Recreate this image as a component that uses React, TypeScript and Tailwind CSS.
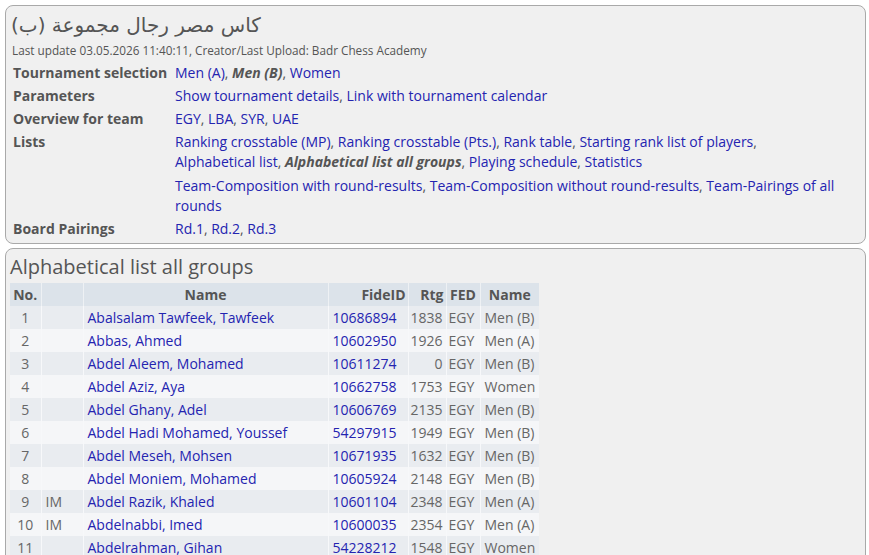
import React from 'react'

const link = 'text-[#2424b0]'
const sep = <span className="text-[#555]">, </span>

function Links({ items }: { items: (string | { cur: string })[] }) {
  return (
    <>
      {items.map((it, i) => (
        <React.Fragment key={i}>
          {i > 0 && sep}
          {typeof it === 'string' ? (
            <a className={link}>{it}</a>
          ) : (
            <b className="italic text-[#555]">{it.cur}</b>
          )}
        </React.Fragment>
      ))}
    </>
  )
}

interface Player {
  no: number
  title: string
  name: string
  fide: string
  rtg: number
  fed: string
  group: string
}

const players: Player[] = [
  { no: 1, title: '', name: 'Abalsalam Tawfeek, Tawfeek', fide: '10686894', rtg: 1838, fed: 'EGY', group: 'Men (B)' },
  { no: 2, title: '', name: 'Abbas, Ahmed', fide: '10602950', rtg: 1926, fed: 'EGY', group: 'Men (A)' },
  { no: 3, title: '', name: 'Abdel Aleem, Mohamed', fide: '10611274', rtg: 0, fed: 'EGY', group: 'Men (B)' },
  { no: 4, title: '', name: 'Abdel Aziz, Aya', fide: '10662758', rtg: 1753, fed: 'EGY', group: 'Women' },
  { no: 5, title: '', name: 'Abdel Ghany, Adel', fide: '10606769', rtg: 2135, fed: 'EGY', group: 'Men (B)' },
  { no: 6, title: '', name: 'Abdel Hadi Mohamed, Youssef', fide: '54297915', rtg: 1949, fed: 'EGY', group: 'Men (B)' },
  { no: 7, title: '', name: 'Abdel Meseh, Mohsen', fide: '10671935', rtg: 1632, fed: 'EGY', group: 'Men (B)' },
  { no: 8, title: '', name: 'Abdel Moniem, Mohamed', fide: '10605924', rtg: 2148, fed: 'EGY', group: 'Men (B)' },
  { no: 9, title: 'IM', name: 'Abdel Razik, Khaled', fide: '10601104', rtg: 2348, fed: 'EGY', group: 'Men (A)' },
  { no: 10, title: 'IM', name: 'Abdelnabbi, Imed', fide: '10600035', rtg: 2354, fed: 'EGY', group: 'Men (A)' },
  { no: 11, title: '', name: 'Abdelrahman, Gihan', fide: '54228212', rtg: 1548, fed: 'EGY', group: 'Women' },
]

function InfoRow({ label, children }: { label: string; children: React.ReactNode }) {
  return (
    <tr className="align-top">
      <td className="w-[162px] py-[1.5px] pr-1 font-bold text-[#555] leading-5 whitespace-nowrap">{label}</td>
      <td className="py-[1.5px] leading-5">{children}</td>
    </tr>
  )
}

export default function App() {
  return (
    <div
      className="bg-white text-[14px] text-[#555] pt-[5px] pl-[5px]"
      style={{ fontFamily: '"Open Sans", "Noto Sans", "DejaVu Sans", sans-serif' }}
    >
      {/* Kopf */}
      <div className="w-[861px] rounded-lg border border-[#a9a9a9] bg-[#f0f0f0] pl-[7px] pb-[3px]">
        <div className="h-[37px] flex items-center text-[20px] text-[#555] -ml-[2px]">
          <span dir="rtl" className="inline-block leading-[30px]" style={{ fontFamily: '"DejaVu Sans", "Noto Sans", sans-serif' }}>
            كاس مصر رجال مجموعة (ب)
          </span>
        </div>
        <div className="text-[11.75px] leading-[14px] mb-[4px] -ml-[1px]">
          Last update 03.05.2026 11:40:11, Creator/Last Upload: Badr Chess Academy
        </div>
        <table className="border-collapse">
          <tbody>
            <InfoRow label="Tournament selection">
              <Links items={['Men (A)', { cur: 'Men (B)' }, 'Women']} />
            </InfoRow>
            <InfoRow label="Parameters">
              <Links items={['Show tournament details', 'Link with tournament calendar']} />
            </InfoRow>
            <InfoRow label="Overview for team">
              <Links items={['EGY', 'LBA', 'SYR', 'UAE']} />
            </InfoRow>
            <InfoRow label="Lists">
              <div className="whitespace-nowrap">
                <Links items={['Ranking crosstable (MP)', 'Ranking crosstable (Pts.)', 'Rank table', 'Starting rank list of players']} />
                <span className="text-[#555]">,</span>
                <br />
                <Links items={['Alphabetical list', { cur: 'Alphabetical list all groups' }, 'Playing schedule', 'Statistics']} />
              </div>
              <div className="mt-[4px] whitespace-nowrap">
                <Links items={['Team-Composition with round-results', 'Team-Composition without round-results', 'Team-Pairings of all']} />
                <br />
                <a className={link}>rounds</a>
              </div>
            </InfoRow>
            <InfoRow label="Board Pairings">
              <Links items={['Rd.1', 'Rd.2', 'Rd.3']} />
            </InfoRow>
          </tbody>
        </table>
      </div>

      {/* Liste */}
      <div className="mt-[4px] w-[861px] h-[320px] rounded-lg border border-[#a9a9a9] bg-[#f0f0f0] pl-[4px]">
        <div className="pt-[4px] mb-[2px] text-[20px] leading-[28px] text-[#555]">Alphabetical list all groups</div>
        <table className="table-fixed border-collapse w-[529px]">
          <colgroup>
            <col className="w-[31px]" />
            <col className="w-[42px]" />
            <col className="w-[245px]" />
            <col className="w-[80px]" />
            <col className="w-[38px]" />
            <col className="w-[34px]" />
            <col className="w-[59px]" />
          </colgroup>
          <thead>
            <tr className="h-[23px] bg-[#dce3ea] font-bold text-[#555]">
              <th className="text-center">No.</th>
              <th className="border-l border-[#eef1f4]"></th>
              <th className="text-center border-l border-[#eef1f4]">Name</th>
              <th className="text-right pr-[2px] border-l border-[#eef1f4]">FideID</th>
              <th className="text-right pr-[2px] border-l border-[#eef1f4]">Rtg</th>
              <th className="text-center border-l border-[#eef1f4]">FED</th>
              <th className="text-center border-l border-[#eef1f4]">Name</th>
            </tr>
          </thead>
          <tbody>
            {players.map((p) => (
              <tr key={p.no} className={`h-[23px] ${p.no % 2 === 1 ? 'bg-[#e9ecf0]' : 'bg-[#f5f6f8]'} text-[#666]`}>
                <td className="text-center">{p.no}</td>
                <td className="pl-[4px] border-l border-[#f7f8fa]">{p.title}</td>
                <td className="pl-[4px] border-l border-[#f7f8fa] whitespace-nowrap">
                  <a className={link}>{p.name}</a>
                </td>
                <td className="pl-[4px] border-l border-[#f7f8fa]">
                  <a className={link}>{p.fide}</a>
                </td>
                <td className="text-right pr-[3px] border-l border-[#f7f8fa]">{p.rtg}</td>
                <td className="pl-[2px] border-l border-[#f7f8fa]">{p.fed}</td>
                <td className="pl-[4px] border-l border-[#f7f8fa] whitespace-nowrap">{p.group}</td>
              </tr>
            ))}
          </tbody>
        </table>
      </div>
    </div>
  )
}
